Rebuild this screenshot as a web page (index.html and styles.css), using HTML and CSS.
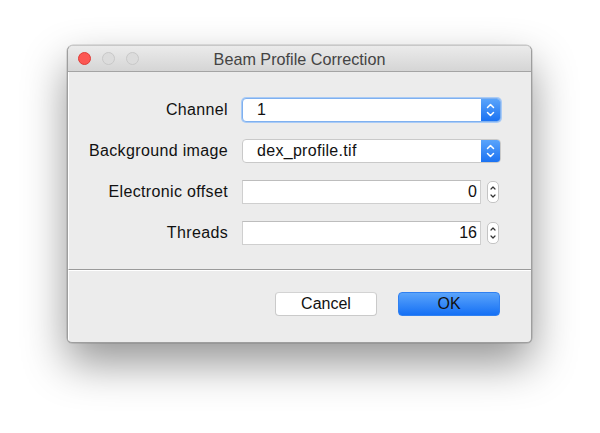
FILE: index.html
```html
<!DOCTYPE html>
<html>
<head>
<meta charset="utf-8">
<link rel="stylesheet" href="styles.css">
</head>
<body>
<div class="stage">
  <div class="window">
    <div class="titlebar">
      <div class="lights">
        <span class="light red"></span>
        <span class="light grey"></span>
        <span class="light grey"></span>
      </div>
      <div class="title">Beam Profile Correction</div>
    </div>
    <div class="content">
      <div class="form">
        <label class="label">Channel</label>
        <div class="combo focus">
          <span class="combo-text">1</span>
          <span class="combo-btn"><svg width="19" height="22" viewBox="0 0 19 22"><path d="M6.5 8.5 L9.5 5.5 L12.5 8.5" fill="none" stroke="#fff" stroke-width="1.5" stroke-linecap="round" stroke-linejoin="round"/><path d="M6.5 13.5 L9.5 16.5 L12.5 13.5" fill="none" stroke="#fff" stroke-width="1.5" stroke-linecap="round" stroke-linejoin="round"/></svg></span>
        </div>
        <label class="label">Background image</label>
        <div class="combo">
          <span class="combo-text">dex_profile.tif</span>
          <span class="combo-btn"><svg width="19" height="22" viewBox="0 0 19 22"><path d="M6.5 8.5 L9.5 5.5 L12.5 8.5" fill="none" stroke="#fff" stroke-width="1.5" stroke-linecap="round" stroke-linejoin="round"/><path d="M6.5 13.5 L9.5 16.5 L12.5 13.5" fill="none" stroke="#fff" stroke-width="1.5" stroke-linecap="round" stroke-linejoin="round"/></svg></span>
        </div>
        <label class="label">Electronic offset</label>
        <div class="spin-row">
          <div class="field">0</div>
          <div class="spinner"><svg width="12" height="22" viewBox="0 0 12 22"><path d="M4 8 L6 6 L8 8" fill="none" stroke="#333" stroke-width="1.2" stroke-linecap="round" stroke-linejoin="round"/><path d="M4 14 L6 16 L8 14" fill="none" stroke="#333" stroke-width="1.2" stroke-linecap="round" stroke-linejoin="round"/></svg></div>
        </div>
        <label class="label">Threads</label>
        <div class="spin-row">
          <div class="field">16</div>
          <div class="spinner"><svg width="12" height="22" viewBox="0 0 12 22"><path d="M4 8 L6 6 L8 8" fill="none" stroke="#333" stroke-width="1.2" stroke-linecap="round" stroke-linejoin="round"/><path d="M4 14 L6 16 L8 14" fill="none" stroke="#333" stroke-width="1.2" stroke-linecap="round" stroke-linejoin="round"/></svg></div>
        </div>
      </div>
    </div>
    <div class="footer">
      <button class="btn cancel">Cancel</button>
      <button class="btn ok">OK</button>
    </div>
  </div>
</div>
</body>
</html>
```
FILE: styles.css
```css
* { box-sizing: border-box; }
html, body { margin: 0; padding: 0; background: #ffffff; }
body {
  width: 600px;
  height: 433px;
  overflow: hidden;
  font-family: "Liberation Sans", Arial, sans-serif;
}
.stage {
  padding: 45px 0 0 67px;
}
.window {
  width: 465px;
  height: 298px;
  background: #ececec;
  border: 1px solid #9e9e9e;
  border-top-color: #c8c8c8;
  border-radius: 6px 6px 5px 5px;
  box-shadow: 0 20px 44px rgba(0, 0, 0, 0.42), 0 0 0 0.5px rgba(0,0,0,0.2);
  display: flex;
  flex-direction: column;
  overflow: hidden;
}
.titlebar {
  position: relative;
  height: 26px;
  flex: none;
  background: linear-gradient(#ebebeb, #d5d5d5);
  border-bottom: 1px solid #a4a4a4;
  display: flex;
  align-items: center;
  justify-content: center;
}
.lights {
  position: absolute;
  left: 10px;
  top: 6px;
  display: flex;
  gap: 11px;
}
.light {
  width: 13px;
  height: 13px;
  border-radius: 50%;
}
.light.red {
  background: #fc5753;
  border: 0.5px solid #df3d38;
}
.light.grey {
  background: #dcdcdc;
  border: 1px solid #c8c8c8;
}
.title {
  font-size: 16.2px;
  color: #444;
  margin-top: 1px;
}
.content {
  flex: none;
  height: 198px;
  border-left: 1px solid #ffffff;
  border-bottom: 1px solid #9a9a9a;
  padding: 26px 0 0 20px;
}
.form {
  display: grid;
  grid-template-columns: 139px 259px;
  column-gap: 14px;
  row-gap: 17px;
  align-items: center;
}
.label {
  font-size: 16px;
  color: #111;
  text-align: right;
  letter-spacing: 0.35px;
  white-space: nowrap;
}
.combo {
  height: 24px;
  display: flex;
  align-items: stretch;
  background: #ffffff;
  border: 1px solid #c9c9c9;
  border-radius: 4px;
  overflow: hidden;
}
.combo.focus {
  border: 1px solid #7fb0ef;
  box-shadow: 0 0 0 1px #a9cbf6;
}
.combo-text {
  flex: 1;
  font-size: 16px;
  color: #111;
  padding-left: 14px;
  line-height: 22px;
  letter-spacing: 0.3px;
}
.combo-btn {
  width: 19px;
  flex: none;
  background: linear-gradient(#5aa4fb, #1b72f2);
  display: flex;
  align-items: center;
  justify-content: center;
}
.spin-row {
  display: flex;
  align-items: center;
  gap: 6px;
}
.field {
  width: 239px;
  height: 24px;
  background: #ffffff;
  border: 1px solid #cfcfcf;
  border-top-color: #bdbdbd;
  font-size: 16px;
  color: #111;
  text-align: right;
  padding-right: 3px;
  line-height: 22px;
}
.spinner {
  width: 12px;
  height: 22px;
  background: #ffffff;
  border: 1px solid #c4c4c4;
  border-radius: 5px;
  display: flex;
  align-items: center;
  justify-content: center;
}
.spinner svg { flex: none; }
.footer {
  flex: 1;
  border-top: 1px solid #ffffff;
  border-left: 1px solid #ffffff;
  display: flex;
  align-items: flex-start;
  justify-content: flex-end;
  padding: 21px 31px 0 0;
  gap: 21px;
}
.btn {
  width: 102px;
  height: 24px;
  font-family: "Liberation Sans", Arial, sans-serif;
  font-size: 16px;
  color: #111;
  border-radius: 4px;
  padding: 0;
  margin: 0;
}
.cancel {
  background: #ffffff;
  border: 1px solid #cacaca;
  border-top-color: #d3d3d3;
}
.ok {
  background: linear-gradient(#5aa4fb, #1570f5);
  border: 1px solid #2f80f1;
}
```
